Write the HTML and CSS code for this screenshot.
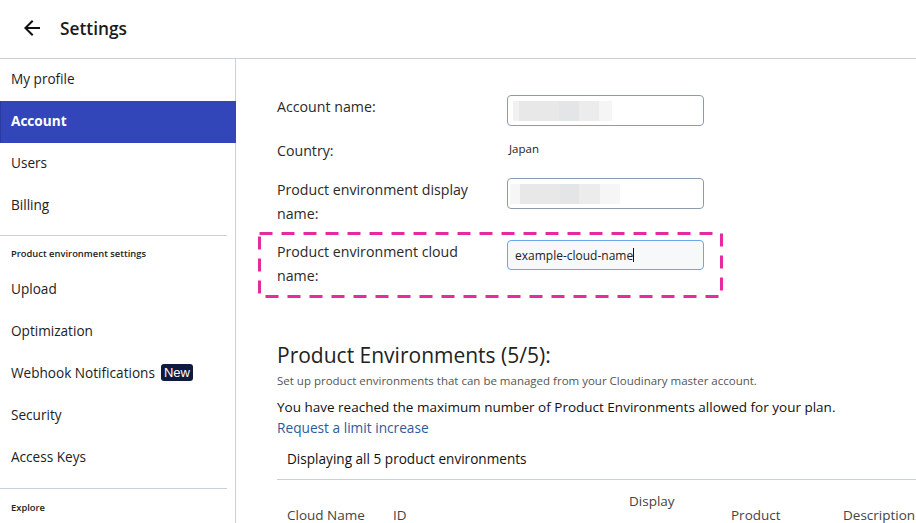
FILE: index.html
```html
<!DOCTYPE html>
<html>
<head>
<meta charset="utf-8">
<link rel="stylesheet" href="styles.css">
</head>
<body>
<header class="topbar">
  <svg class="back" width="24" height="24" viewBox="0 0 24 24"><path d="M20 11H7.83l5.59-5.59L12 4l-8 8 8 8 1.41-1.41L7.83 13H20v-2z" fill="#111"/></svg>
  <h1 class="title">Settings</h1>
</header>
<div class="layout">
  <nav class="sidebar">
    <a class="nav-item">My profile</a>
    <a class="nav-item active">Account</a>
    <a class="nav-item">Users</a>
    <a class="nav-item">Billing</a>
    <div class="divider"></div>
    <div class="nav-section">Product environment settings</div>
    <a class="nav-item">Upload</a>
    <a class="nav-item">Optimization</a>
    <a class="nav-item">Webhook Notifications <span class="badge">New</span></a>
    <a class="nav-item">Security</a>
    <a class="nav-item">Access Keys</a>
    <div class="divider divider-low"></div>
    <div class="nav-section nav-section-low">Explore</div>
  </nav>
  <main class="content">
    <div class="form">
      <div class="row">
        <label class="label">Account name:</label>
        <div class="input"><span class="blur blur-a"></span></div>
      </div>
      <div class="row row-text">
        <label class="label">Country:</label>
        <div class="value">Japan</div>
      </div>
      <div class="row">
        <label class="label">Product environment display<br>name:</label>
        <div class="input"><span class="blur blur-b"></span></div>
      </div>
      <div class="row highlight">
        <label class="label">Product environment cloud<br>name:</label>
        <div class="input focused">example-cloud-name<span class="caret"></span></div>
        <svg class="dash-box" preserveAspectRatio="none"><rect x="1.5" y="1.5" width="462" height="63" fill="none" stroke="#e62b9c" stroke-width="3" stroke-dasharray="13 9"/></svg>
      </div>
    </div>

    <section class="envs">
      <h2 class="envs-title">Product Environments (5/5):</h2>
      <p class="envs-sub">Set up product environments that can be managed from your Cloudinary master account.</p>
      <p class="envs-limit">You have reached the maximum number of Product Environments allowed for your plan.</p>
      <a class="envs-link">Request a limit increase</a>
      <div class="envs-count">Displaying all 5 product environments</div>
      <div class="table-head">
        <div class="th">Cloud Name</div>
        <div class="th">ID</div>
        <div class="th th-top">Display</div>
        <div class="th">Product</div>
        <div class="th">Description</div>
      </div>
    </section>
  </main>
</div>
</body>
</html>
```
FILE: styles.css
```css
* { box-sizing: border-box; }
html, body { margin: 0; padding: 0; }
body {
  width: 916px;
  height: 523px;
  overflow: hidden;
  font-family: "Open Sans", "Noto Sans", sans-serif;
  color: #222;
  background: #fff;
}
.topbar {
  height: 59px;
  border-bottom: 1px solid #c8d0dc;
  display: flex;
  align-items: center;
  padding-left: 20px;
  padding-bottom: 2px;
  gap: 16px;
}
.back { display: block; }
.title {
  margin: 0;
  font-size: 17.3px;
  font-weight: 600;
  color: #1a1a1a;
}
.layout {
  display: flex;
  height: 464px;
}
.sidebar {
  width: 236px;
  flex: none;
  border-right: 1px solid #c8d0dc;
  display: flex;
  flex-direction: column;
}
.nav-item {
  height: 42px;
  display: flex;
  align-items: center;
  padding-left: 11px;
  padding-bottom: 3px;
  font-size: 13.6px;
  color: #222;
  gap: 6px;
}
.nav-item.active {
  background: #3346b9;
  color: #fff;
  font-weight: 700;
  border-left: 1px solid #2a3a9e;
  padding-left: 10px;
  margin-right: -1px;
}
.badge {
  background: #0f1a3f;
  color: #fff;
  font-family: "Liberation Sans", Arial, sans-serif;
  font-size: 13px;
  padding: 1px 3px 1px 3px;
  border-radius: 3px;
  line-height: 15px;
}
.divider {
  height: 1px;
  background: #c8d0dc;
  margin: 8px 8px 0 0;
}
.divider-low { margin-top: 9px; }
.nav-section {
  font-size: 9.4px;
  font-weight: 600;
  color: #222;
  padding: 12px 0 10px 11px;
  line-height: 11px;
}
.nav-section-low { padding-top: 13px; }

.content {
  flex: 1;
  overflow: hidden;
  padding-left: 41px;
}
.form {
  padding-top: 36px;
  display: flex;
  flex-direction: column;
  gap: 14px;
}
.row {
  display: flex;
  align-items: flex-start;
  width: 427px;
  position: relative;
}
.row-text { margin-top: -1px; margin-bottom: 1px; }
.label {
  width: 230px;
  flex: none;
  font-size: 14.2px;
  line-height: 24px;
  color: #2a2a2a;
}
.input {
  width: 197px;
  height: 31px;
  border: 1px solid #8b9bb0;
  border-radius: 4px;
  display: flex;
  align-items: center;
  padding-left: 7px;
  font-size: 12px;
  color: #222;
  background: #fff;
}
.input.focused {
  border-color: #6aa7e6;
  background: #f7f8fa;
  height: 30px;
}
.caret {
  display: inline-block;
  width: 1px;
  height: 14px;
  background: #111;
}
.value {
  padding-left: 2px;
  font-size: 11.5px;
  line-height: 20px;
  color: #222;
}
.blur {
  display: block;
  height: 20px;
}
.blur-a {
  width: 99px;
  margin-left: -2px;
  background: linear-gradient(90deg, #f1f1f1 0 6%, #e8e8e8 6% 46%, #e4e5e6 46% 67%, #ececec 67% 87%, #f5f5f5 87%);
}
.blur-b {
  width: 110px;
  margin-left: -5px;
  background: linear-gradient(90deg, #f6f6f6 0 9%, #e8e8e8 9% 45%, #e4e5e6 45% 63%, #ececec 63% 82%, #f6f6f6 82%);
}
.dash-box {
  position: absolute;
  left: -19px;
  top: -8px;
  width: 465px;
  height: 66px;
  pointer-events: none;
}

.envs { padding-top: 53px; }
.envs-title {
  margin: 0;
  font-size: 21px;
  font-weight: 400;
  line-height: 28px;
  color: #222;
}
.envs-sub {
  margin: 4px 0 0;
  font-size: 11.5px;
  line-height: 16px;
  color: #555;
}
.envs-limit {
  margin: 7px 0 0;
  font-size: 13.5px;
  line-height: 22px;
  color: #111;
}
.envs-link {
  display: block;
  font-size: 13.7px;
  line-height: 20px;
  color: #2d5b99;
}
.envs-count {
  margin-top: 10px;
  padding-left: 10px;
  font-size: 13.6px;
  line-height: 22px;
  color: #111;
  height: 32px;
  border-bottom: 1px solid #c8d0dc;
  width: 700px;
}
.table-head {
  display: grid;
  grid-template-columns: 106px 236px 102px 112px 120px;
  align-items: start;
  padding: 9px 0 0 10px;
  width: 700px;
}
.th {
  font-size: 13.5px;
  line-height: 24px;
  color: #444;
  padding-top: 14px;
}
.th.th-top { padding-top: 0; }
```
